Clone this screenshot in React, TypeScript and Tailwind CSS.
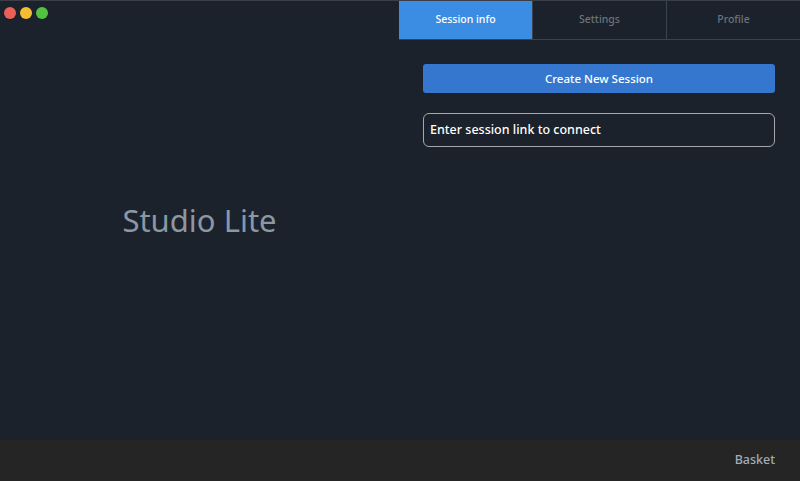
export default function App() {
  const tabs = ['Session info', 'Settings', 'Profile'];
  return (
    <div
      className="flex h-[481px] w-[800px] flex-col overflow-hidden bg-[#1b222b]"
      style={{ fontFamily: '"Noto Sans", "Open Sans", sans-serif' }}
    >
      <div className="flex flex-1 border-t border-[#3a3f45]">
        {/* left panel */}
        <div className="relative flex w-[399px] items-center justify-center">
          <div className="absolute left-[4px] top-[6px] flex gap-[4px]">
            <span className="h-[12px] w-[12px] rounded-full bg-[#ec5f58]" />
            <span className="h-[12px] w-[12px] rounded-full bg-[#f5bd31]" />
            <span className="h-[12px] w-[12px] rounded-full bg-[#52c33f]" />
          </div>
          <h1 className="text-[31px] text-[#8b97a4]">Studio Lite</h1>
        </div>

        {/* right panel */}
        <div className="flex flex-1 flex-col">
          <div className="flex h-[39px] border-b border-[#3a4450]">
            {tabs.map((t, i) => (
              <div
                key={t}
                className={
                  i === 0
                    ? 'flex flex-1 items-center justify-center bg-[#3b8de3] text-[10.5px] font-medium text-white'
                    : 'flex flex-1 items-center justify-center border-l border-[#3a4450] text-[10.5px] font-medium text-[#6a737d]'
                }
              >
                {t}
              </div>
            ))}
          </div>
          <div className="flex flex-col gap-[20px] px-[24px] pt-[24px] pr-[25px]">
            <button className="h-[29px] w-full rounded-[3px] bg-[#3577cf] text-[11.5px] font-medium text-white">
              Create New Session
            </button>
            <div className="flex h-[34px] items-center rounded-[6px] border border-[#a3a8ad] px-[6px] text-[12.5px] font-medium text-white">
              Enter session link to connect
            </div>
          </div>
        </div>
      </div>

      {/* footer */}
      <div className="flex h-[41px] items-center justify-end bg-[#252525] pr-[25px] text-[12.5px] font-medium text-[#a4abb3]">
        Basket
      </div>
    </div>
  );
}
